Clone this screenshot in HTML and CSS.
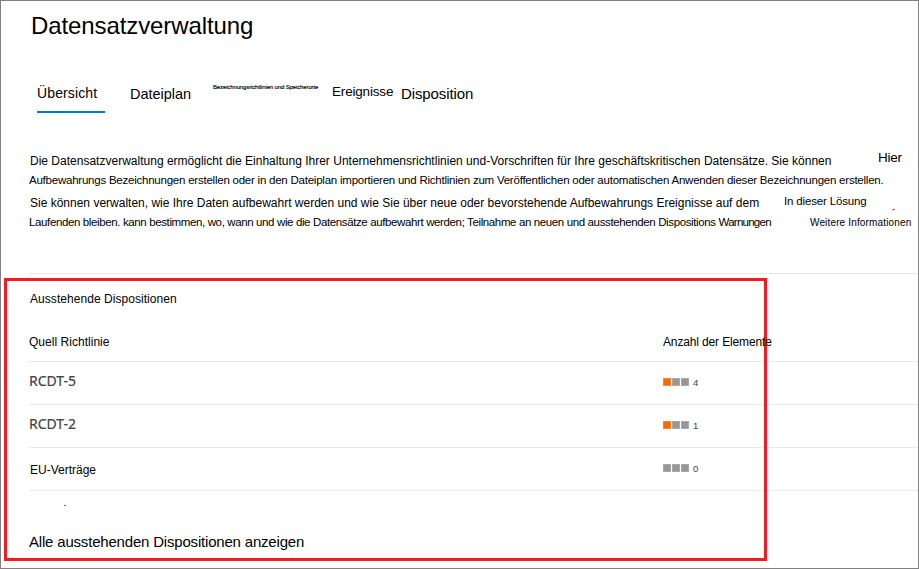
FILE: index.html
```html
<!DOCTYPE html>
<html lang="de">
<head>
<meta charset="utf-8">
<title>Datensatzverwaltung</title>
<link rel="stylesheet" href="styles.css">
</head>
<body>
<div class="page">
  <h1 class="title">Datensatzverwaltung</h1>
  <nav class="tabs">
    <a class="tab tab-overview">Übersicht</a>
    <a class="tab tab-plan">Dateiplan</a>
    <a class="tab tab-labels">Bezeichnungsrichtlinien und Speicherorte</a>
    <a class="tab tab-events">Ereignisse</a>
    <a class="tab tab-disposition">Disposition</a>
  </nav>
  <section class="intro">
    <div class="line line-1"><span class="wide">Die Datensatzverwaltung ermöglicht die Einhaltung Ihrer Unternehmensrichtlinien und-Vorschriften für Ihre geschäftskritischen Datensätze. Sie können</span><span class="here">Hier</span></div>
    <div class="line line-2"><span>Aufbewahrungs Bezeichnungen erstellen oder in den Dateiplan importieren und Richtlinien zum Veröffentlichen oder automatischen Anwenden dieser Bezeichnungen erstellen.</span></div>
    <div class="line line-3"><span class="wide">Sie können verwalten, wie Ihre Daten aufbewahrt werden und wie Sie über neue oder bevorstehende Aufbewahrungs Ereignisse auf dem</span><span class="solution">In dieser Lösung</span><i class="tick"></i></div>
    <div class="line line-4"><span>Laufenden bleiben. kann bestimmen, wo, wann und wie die Datensätze aufbewahrt werden; Teilnahme an neuen und ausstehenden Dispositions <span class="tight">Warnungen</span></span><a class="more">Weitere Informationen</a></div>
  </section>
  <section class="pending">
    <h2 class="heading">Ausstehende Dispositionen</h2>
    <div class="row head"><span class="source">Quell Richtlinie</span><span class="amount">Anzahl der Elemente</span></div>
    <div class="row"><span class="name">RCDT-5</span><span class="meter"><i class="hot"></i><i></i><i></i><b>4</b></span></div>
    <div class="row"><span class="name">RCDT-2</span><span class="meter"><i class="hot"></i><i></i><i></i><b>1</b></span></div>
    <div class="row"><span class="contract">EU-Verträge</span><span class="meter"><i></i><i></i><i></i><b>0</b></span></div>
    <i class="speck"></i>
    <a class="all">Alle ausstehenden Dispositionen anzeigen</a>
  </section>
  <div class="highlight"></div>
</div>
</body>
</html>
```
FILE: styles.css
```css
* { box-sizing: border-box; }
body { margin: 0; background: #fff; }
.page {
  position: relative;
  width: 919px;
  height: 569px;
  border: 1px solid #808080;
  overflow: hidden;
  color: #000;
  font: 12px/20px "Liberation Sans", Arial, sans-serif;
  white-space: nowrap;
}
.title {
  margin: 10px 0 0 30px;
  font-size: 24px;
  font-weight: 400;
  line-height: 30px;
  letter-spacing: -0.1px;
}
.tabs {
  display: flex;
  align-items: flex-start;
  height: 37px;
  margin: 35px 0 0 36px;
}
.tab-overview {
  width: 68px;
  height: 37px;
  margin-right: 25px;
  padding-top: 7px;
  border-bottom: 2px solid #0078d4;
  font-size: 14px;
  letter-spacing: 0.12px;
}
.tab-plan { width: 83px; padding-top: 8px; font-size: 14.5px; letter-spacing: -0.03px; }
.tab-labels { width: 119px; padding-top: 1px; font-size: 6px; letter-spacing: -0.13px; -webkit-text-stroke: 0.15px #000; }
.tab-events { width: 69px; padding-top: 6px; font-size: 13.5px; letter-spacing: -0.18px; }
.tab-disposition { padding-top: 8px; font-size: 15px; letter-spacing: -0.1px; }

.intro { height: 160px; margin-left: 28px; padding-top: 38px; }
.line { display: flex; height: 20px; }
.line-1 { height: 19px; }
.line-2 { height: 23px; font-size: 11.5px; letter-spacing: -0.23px; }
.line-3 { height: 19px; }
.line-4 { font-size: 11.5px; letter-spacing: -0.375px; }
.tight { letter-spacing: -0.75px; }
.wide { flex: none; padding-left: 1px; }
.line-1 .wide { width: 849px; letter-spacing: 0.007px; }
.line-3 .wide { width: 755px; }
.here { margin-top: -3px; font-size: 13.5px; letter-spacing: -0.25px; }
.solution { width: 108px; margin-top: -2px; font-size: 11.5px; letter-spacing: -0.16px; }
.tick { width: 3px; height: 1px; margin-top: 16px; background: #555; transform: rotate(-25deg); }
.line-4 > span { width: 781px; }
.more { margin-top: 1px; font-size: 10px; letter-spacing: 0.15px; }

.pending { height: 296px; margin-left: 28px; border-top: 1px solid #e6e6e6; }
.heading { height: 44px; margin: 0; padding: 15px 0 0 1px; font-size: 12px; font-weight: 400; letter-spacing: 0.05px; }
.row { display: grid; grid-template-columns: 634px 1fr; height: 43px; border-bottom: 1px solid #eaeaea; }
.head { height: 44px; padding-top: 14px; }
.source { letter-spacing: 0.03px; }
.amount { position: relative; z-index: 2; letter-spacing: -0.14px; }
.name { padding-top: 9px; color: #444; font-family: "Noto Sans", "Open Sans", sans-serif; font-size: 14px; -webkit-text-stroke: 0.2px #444; }
.contract { padding: 12px 0 0 1px; }
.meter { display: flex; gap: 1px; padding-top: 16px; }
.meter i { width: 8px; height: 8px; background: #979797; border: 1px solid #a8a8a8; }
.meter .hot { background: #f76b00; border-color: #fa8530; }
.meter b { margin: -5px 0 0 3px; color: #444; font-size: 9.5px; font-weight: 400; }
.speck { display: block; width: 2px; height: 1px; margin: 14px 0 0 35px; background: #666; }
.all { display: block; margin-top: 26px; font-size: 15px; letter-spacing: -0.19px; }
.highlight {
  position: absolute;
  z-index: 1;
  left: 3px;
  top: 277px;
  width: 763px;
  height: 283px;
  border: 3px solid #f01c24;
}
```
